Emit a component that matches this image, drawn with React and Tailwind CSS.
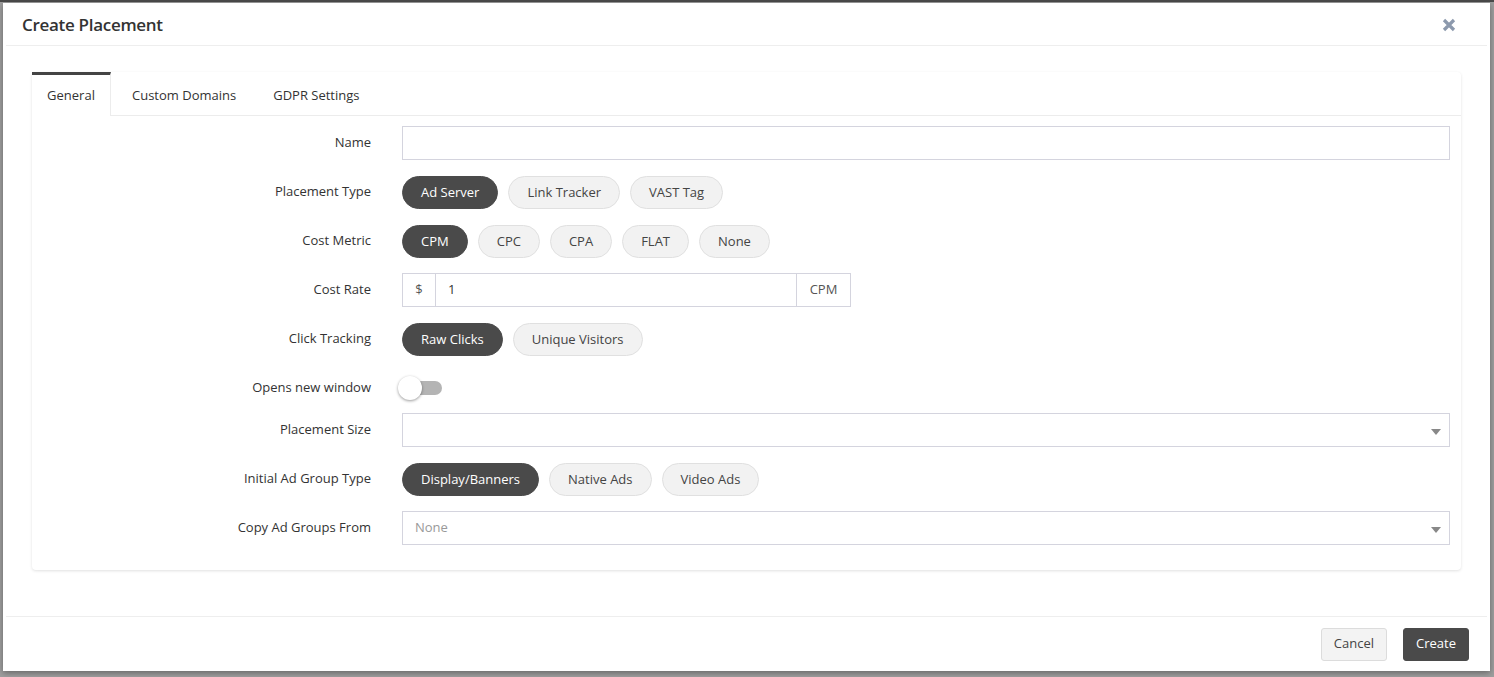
import React from "react";

const font = { fontFamily: '"Open Sans", "Noto Sans", sans-serif' };

function Pill({ active, children }) {
  return (
    <button
      className={
        active
          ? "h-[33px] px-[18px] rounded-full bg-[#4a4a4a] border border-[#4a4a4a] text-white text-[13px] leading-none"
          : "h-[33px] px-[18px] rounded-full bg-[#f2f2f2] border border-[#e0e0e0] text-[#444] text-[13px] leading-none"
      }
    >
      {children}
    </button>
  );
}

function Row({ label, children, extra = "" }) {
  return (
    <div className={`flex items-center h-[34px] ${extra}`}>
      <div className="w-[339px] text-right text-[13px] text-[#333] shrink-0">{label}</div>
      <div className="flex-1 ml-[31px] mr-[11px] flex items-center gap-[10px]">{children}</div>
    </div>
  );
}

function Caret() {
  return (
    <svg width="10" height="6" viewBox="0 0 10 6" className="absolute right-[8px] top-[15px]">
      <path d="M0 0 L10 0 L5 6 Z" fill="#888" />
    </svg>
  );
}

export default function App() {
  return (
    <div className="w-[1494px] h-[677px] bg-[#9e9e9e] relative overflow-hidden" style={font}>
      <div className="h-[2px] bg-[#4a4a4a] w-full" />
      <div className="absolute left-[3px] top-[3px] w-[1487px] h-[668px] bg-white shadow-[0_2px_6px_rgba(0,0,0,0.35)] flex flex-col">
        {/* header */}
        <div className="h-[43px] flex items-center justify-between pl-[16px] pr-[31px] border-b border-[#eeeeee] mx-[3px] pt-[2px]">
          <div className="text-[17px] font-semibold text-[#333] tracking-[-0.3px]">Create Placement</div>
          <svg width="14" height="14" viewBox="0 0 14 14">
            <path d="M2 2 L12 12 M12 2 L2 12" stroke="#8c99ad" strokeWidth="3.2" strokeLinecap="butt" />
          </svg>
        </div>
        {/* body */}
        <div className="px-[29px] pt-[26px] flex-1">
          <div className="rounded-[4px] bg-white shadow-[0_1px_3px_rgba(0,0,0,0.12)] pb-[25px]">
            <div className="flex h-[44px] border-b border-[#ececec] text-[13px] text-[#333]">
              <div className="w-[79px] border-t-[3px] border-[#444] border-r border-r-[#ececec] bg-white flex items-center justify-center pt-[1px] -mb-px">General</div>
              <div className="px-[21px] flex items-center pt-[4px]">Custom Domains</div>
              <div className="px-[16px] flex items-center pt-[4px]">GDPR Settings</div>
            </div>
            <div className="flex flex-col gap-[15px] pt-[10px]">
              <Row label="Name">
                <div className="flex-1 h-[34px] border border-[#d4d4de]" />
              </Row>
              <Row label="Placement Type">
                <Pill active>Ad Server</Pill>
                <Pill>Link Tracker</Pill>
                <Pill>VAST Tag</Pill>
              </Row>
              <Row label="Cost Metric">
                <Pill active>CPM</Pill>
                <Pill>CPC</Pill>
                <Pill>CPA</Pill>
                <Pill>FLAT</Pill>
                <Pill>None</Pill>
              </Row>
              <Row label="Cost Rate">
                <div className="flex h-[34px] border border-[#d4d4de] text-[13px] text-[#555]">
                  <div className="w-[33px] flex items-center justify-center border-r border-[#d4d4de]">$</div>
                  <div className="w-[360px] flex items-center pl-[12px] text-[#333]">1</div>
                  <div className="w-[54px] flex items-center justify-center border-l border-[#d4d4de]">CPM</div>
                </div>
              </Row>
              <Row label="Click Tracking">
                <Pill active>Raw Clicks</Pill>
                <Pill>Unique Visitors</Pill>
              </Row>
              <Row label="Opens new window" extra="-mb-[7px]">
                <div className="relative w-[44px] h-[24px] -ml-[4px]">
                  <div className="absolute left-[8px] top-[5px] w-[36px] h-[14px] rounded-full bg-[#b4b4b4]" />
                  <div className="absolute left-0 top-0 w-[24px] h-[24px] rounded-full bg-white shadow-[0_1px_3px_rgba(0,0,0,0.4)]" />
                </div>
              </Row>
              <Row label="Placement Size">
                <div className="relative flex-1 h-[34px] border border-[#d4d4de]">
                  <Caret />
                </div>
              </Row>
              <Row label="Initial Ad Group Type">
                <Pill active>Display/Banners</Pill>
                <Pill>Native Ads</Pill>
                <Pill>Video Ads</Pill>
              </Row>
              <Row label="Copy Ad Groups From">
                <div className="relative flex-1 h-[34px] border border-[#d4d4de] flex items-center pl-[12px] text-[13px] text-[#999]">
                  None
                  <Caret />
                </div>
              </Row>
            </div>
          </div>
        </div>
        {/* footer */}
        <div className="h-[55px] border-t border-[#eeeeee] mx-[3px] flex items-center justify-end gap-[16px] pr-[18px]">
          <button className="h-[33px] px-[12px] rounded-[3px] bg-[#f3f3f3] border border-[#dcdcdc] text-[13px] text-[#444]">Cancel</button>
          <button className="h-[33px] px-[12px] rounded-[3px] bg-[#4a4a4a] border border-[#4a4a4a] text-[13px] text-white">Create</button>
        </div>
      </div>
    </div>
  );
}
